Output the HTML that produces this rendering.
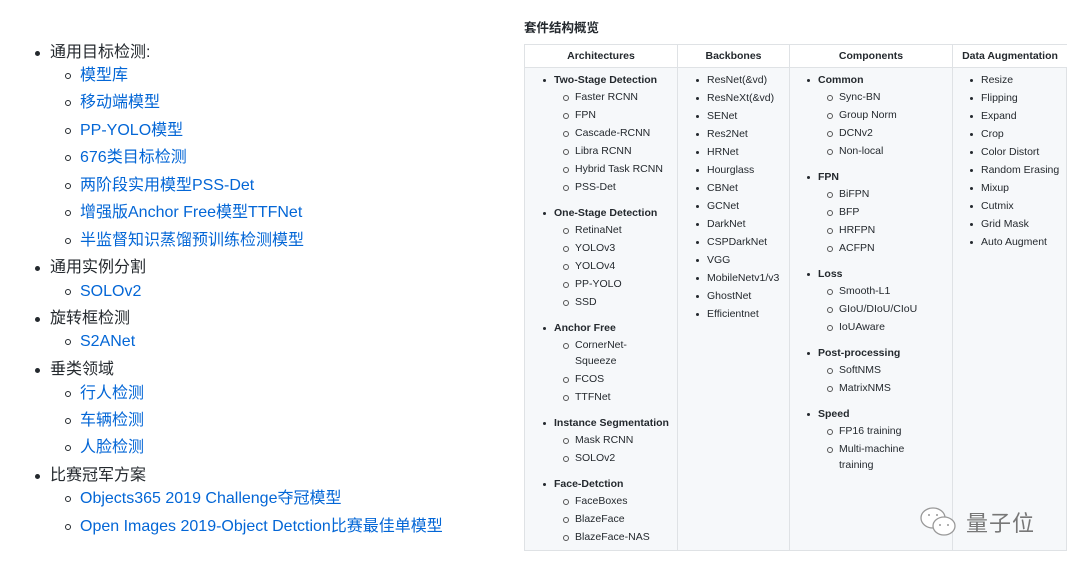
<!DOCTYPE html>
<html><head><meta charset="utf-8"><style>
*{margin:0;padding:0;box-sizing:border-box}
body{width:1078px;height:570px;background:#fff;font-family:"Liberation Sans","Noto Sans CJK SC",sans-serif;position:relative;overflow:hidden;color:#24292e}
.l{position:absolute;font-size:16px;line-height:20px;white-space:nowrap}
.l.t{left:50px;color:#24292e}
.l.t:before{content:"";position:absolute;left:-15px;top:8px;width:5px;height:5px;border-radius:50%;background:#24292e}
.l.s{left:80px;color:#0366d6}
.l.s:before{content:"";position:absolute;left:-15px;top:7px;width:4px;height:4px;border-radius:50%;border:1px solid #24292e}
h3{position:absolute;left:524px;top:17px;font-size:12.5px;font-weight:bold}
.tb{position:absolute;left:524px;top:44px;width:543px;height:507px;border:1px solid #dfe2e5;background:#f6f8fa}
.hd{position:absolute;top:0;height:23px;background:#fff;border-bottom:1px solid #dfe2e5;font-size:10.5px;font-weight:bold;text-align:center;line-height:22px}
.vl{position:absolute;top:0;bottom:0;width:1px;background:#dfe2e5}
.col{position:absolute;top:27px;font-size:10.5px;white-space:nowrap}
.h{position:relative;height:16px;line-height:16px;font-weight:bold;padding-left:13px}
.h:before{content:"";position:absolute;left:2px;top:7px;width:3px;height:3px;border-radius:50%;background:#24292e}
.i{position:relative;height:18px;line-height:18px;padding-left:34px}
.i:before{content:"";position:absolute;left:22px;top:7px;width:4px;height:4px;border-radius:50%;border:1px solid #555}
.i2{height:34px;line-height:16px;padding-top:1px}
.b{position:relative;height:18px;line-height:18px;padding-left:13px}
.b:before{content:"";position:absolute;left:2px;top:8px;width:3px;height:3px;border-radius:50%;background:#24292e}
.g{height:9px}
</style></head><body>
<div class="l t" style="top:43px">通用目标检测:</div>
<div class="l s" style="top:66px">模型库</div>
<div class="l s" style="top:93px">移动端模型</div>
<div class="l s" style="top:121px">PP-YOLO模型</div>
<div class="l s" style="top:148px">676类目标检测</div>
<div class="l s" style="top:176px">两阶段实用模型PSS-Det</div>
<div class="l s" style="top:203px">增强版Anchor Free模型TTFNet</div>
<div class="l s" style="top:231px">半监督知识蒸馏预训练检测模型</div>
<div class="l t" style="top:258px">通用实例分割</div>
<div class="l s" style="top:282px">SOLOv2</div>
<div class="l t" style="top:309px">旋转框检测</div>
<div class="l s" style="top:332px">S2ANet</div>
<div class="l t" style="top:360px">垂类领域</div>
<div class="l s" style="top:384px">行人检测</div>
<div class="l s" style="top:411px">车辆检测</div>
<div class="l s" style="top:438px">人脸检测</div>
<div class="l t" style="top:466px">比赛冠军方案</div>
<div class="l s" style="top:489px">Objects365 2019 Challenge夺冠模型</div>
<div class="l s" style="top:517px">Open Images 2019-Object Detction比赛最佳单模型</div>

<h3>套件结构概览</h3>
<div class="tb">
<div class="hd" style="left:0;width:152px">Architectures</div>
<div class="hd" style="left:153px;width:111px">Backbones</div>
<div class="hd" style="left:265px;width:162px">Components</div>
<div class="hd" style="left:428px;width:114px">Data Augmentation</div>
<div class="vl" style="left:152px"></div><div class="vl" style="left:264px"></div><div class="vl" style="left:427px"></div>
<div class="col" style="left:16px">
<div class="h">Two-Stage Detection</div><div class="i">Faster RCNN</div><div class="i">FPN</div><div class="i">Cascade-RCNN</div><div class="i">Libra RCNN</div><div class="i">Hybrid Task RCNN</div><div class="i">PSS-Det</div><div class="g"></div>
<div class="h">One-Stage Detection</div><div class="i">RetinaNet</div><div class="i">YOLOv3</div><div class="i">YOLOv4</div><div class="i">PP-YOLO</div><div class="i">SSD</div><div class="g"></div>
<div class="h">Anchor Free</div><div class="i i2">CornerNet-<br>Squeeze</div><div class="i">FCOS</div><div class="i">TTFNet</div><div class="g"></div>
<div class="h">Instance Segmentation</div><div class="i">Mask RCNN</div><div class="i">SOLOv2</div><div class="g"></div>
<div class="h">Face-Detction</div><div class="i">FaceBoxes</div><div class="i">BlazeFace</div><div class="i">BlazeFace-NAS</div>
</div>
<div class="col" style="left:169px;top:26px">
<div class="b">ResNet(&amp;vd)</div><div class="b">ResNeXt(&amp;vd)</div><div class="b">SENet</div><div class="b">Res2Net</div><div class="b">HRNet</div><div class="b">Hourglass</div><div class="b">CBNet</div><div class="b">GCNet</div><div class="b">DarkNet</div><div class="b">CSPDarkNet</div><div class="b">VGG</div><div class="b">MobileNetv1/v3</div><div class="b">GhostNet</div><div class="b">Efficientnet</div>
</div>
<div class="col" style="left:280px">
<div class="h">Common</div><div class="i">Sync-BN</div><div class="i">Group Norm</div><div class="i">DCNv2</div><div class="i">Non-local</div><div class="g"></div>
<div class="h">FPN</div><div class="i">BiFPN</div><div class="i">BFP</div><div class="i">HRFPN</div><div class="i">ACFPN</div><div class="g"></div>
<div class="h">Loss</div><div class="i">Smooth-L1</div><div class="i">GIoU/DIoU/CIoU</div><div class="i">IoUAware</div><div class="g"></div>
<div class="h">Post-processing</div><div class="i">SoftNMS</div><div class="i">MatrixNMS</div><div class="g"></div>
<div class="h">Speed</div><div class="i">FP16 training</div><div class="i i2">Multi-machine<br>training</div>
</div>
<div class="col" style="left:443px;top:26px">
<div class="b">Resize</div><div class="b">Flipping</div><div class="b">Expand</div><div class="b">Crop</div><div class="b">Color Distort</div><div class="b">Random Erasing</div><div class="b">Mixup</div><div class="b">Cutmix</div><div class="b">Grid Mask</div><div class="b">Auto Augment</div>
</div>
</div>
<svg style="position:absolute;left:917px;top:503px" width="44" height="40" viewBox="0 0 44 40">
<ellipse cx="16" cy="15" rx="12" ry="10" fill="#fff" stroke="#999" stroke-width="1.3"/>
<ellipse cx="27" cy="23" rx="11" ry="9" fill="#fff" stroke="#999" stroke-width="1.3"/>
<circle cx="12" cy="12" r="1" fill="#999"/><circle cx="20" cy="12" r="1" fill="#999"/>
<circle cx="23" cy="22" r="1" fill="#999"/><circle cx="31" cy="22" r="1" fill="#999"/>
</svg>
<div style="position:absolute;left:966px;top:506px;font-size:22px;color:#777;font-family:'Noto Sans CJK SC',sans-serif;letter-spacing:1px">量子位</div>
</body></html>
